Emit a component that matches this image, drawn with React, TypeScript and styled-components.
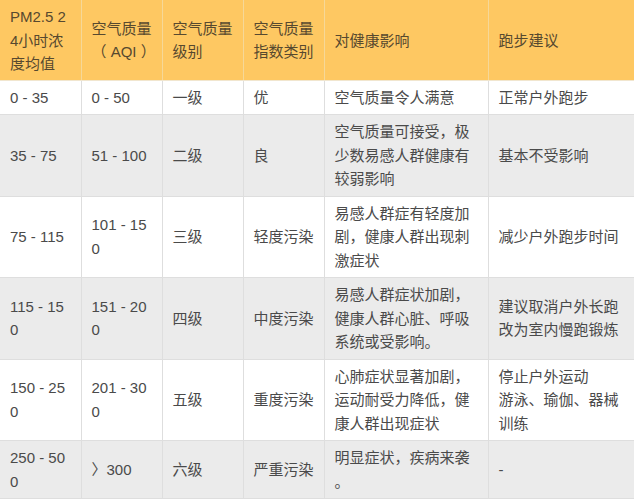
import React from 'react';
import styled, { createGlobalStyle } from 'styled-components';

const GlobalStyle = createGlobalStyle`
  body {
    margin: 0;
    background: #fff;
  }
`;

const Table = styled.table`
  width: 634px;
  table-layout: fixed;
  border-collapse: collapse;
  font-family: 'Liberation Sans', 'Noto Sans CJK SC', sans-serif;
  font-size: 15px;
  line-height: 23.5px;
  color: #4a4a4a;
`;

const HeadCell = styled.th`
  background: #fec862;
  color: #57492f;
  font-weight: normal;
  text-align: left;
  vertical-align: middle;
  padding: 5px 9px 4px 10px;
  border-left: 1px solid #f6d898;
  border-bottom: 1px solid #f1e6cf;
  word-break: break-all;
  line-break: anywhere;
  &:first-child {
    border-left: none;
  }
`;

const Row = styled.tr<{ $shaded: boolean }>`
  background: ${(p) => (p.$shaded ? '#ebebeb' : '#ffffff')};
`;

const Cell = styled.td`
  padding: 5px 9px 5px 10px;
  vertical-align: middle;
  border-left: 1px solid #dedede;
  border-bottom: 1px solid #dedede;
  word-break: break-all;
  line-break: anywhere;
  &:first-child {
    border-left: none;
  }
`;

const WIDTHS = [81, 81, 81, 81, 164, 146];

const HEADERS = [
  'PM2.5 24小时浓度均值',
  '空气质量（ AQI ）',
  '空气质量级别',
  '空气质量指数类别',
  '对健康影响',
  '跑步建议',
];

type RowData = [string, string, string, string, string, React.ReactNode];

const ROWS: RowData[] = [
  ['0 - 35', '0 - 50', '一级', '优', '空气质量令人满意', '正常户外跑步'],
  [
    '35 - 75',
    '51 - 100',
    '二级',
    '良',
    '空气质量可接受，极少数易感人群健康有较弱影响',
    '基本不受影响',
  ],
  [
    '75 - 115',
    '101 - 150',
    '三级',
    '轻度污染',
    '易感人群症有轻度加剧，健康人群出现刺激症状',
    '减少户外跑步时间',
  ],
  [
    '115 - 150',
    '151 - 200',
    '四级',
    '中度污染',
    '易感人群症状加剧，健康人群心脏、呼吸系统或受影响。',
    '建议取消户外长跑改为室内慢跑锻炼',
  ],
  [
    '150 - 250',
    '201 - 300',
    '五级',
    '重度污染',
    '心肺症状显著加剧，运动耐受力降低，健康人群出现症状',
    <>
      停止户外运动
      <br />
      游泳、瑜伽、器械训练
    </>,
  ],
  ['250 - 500', '〉300', '六级', '严重污染', '明显症状，疾病来袭。', '-'],
];

const App = () => (
  <>
    <GlobalStyle />
    <Table>
      <colgroup>
        {WIDTHS.map((w, i) => (
          <col key={i} style={{ width: w }} />
        ))}
      </colgroup>
      <thead>
        <tr>
          {HEADERS.map((h) => (
            <HeadCell key={h}>{h}</HeadCell>
          ))}
        </tr>
      </thead>
      <tbody>
        {ROWS.map((row, i) => (
          <Row key={i} $shaded={i % 2 === 1}>
            {row.map((c, j) => (
              <Cell key={j}>{c}</Cell>
            ))}
          </Row>
        ))}
      </tbody>
    </Table>
  </>
);

export default App;
